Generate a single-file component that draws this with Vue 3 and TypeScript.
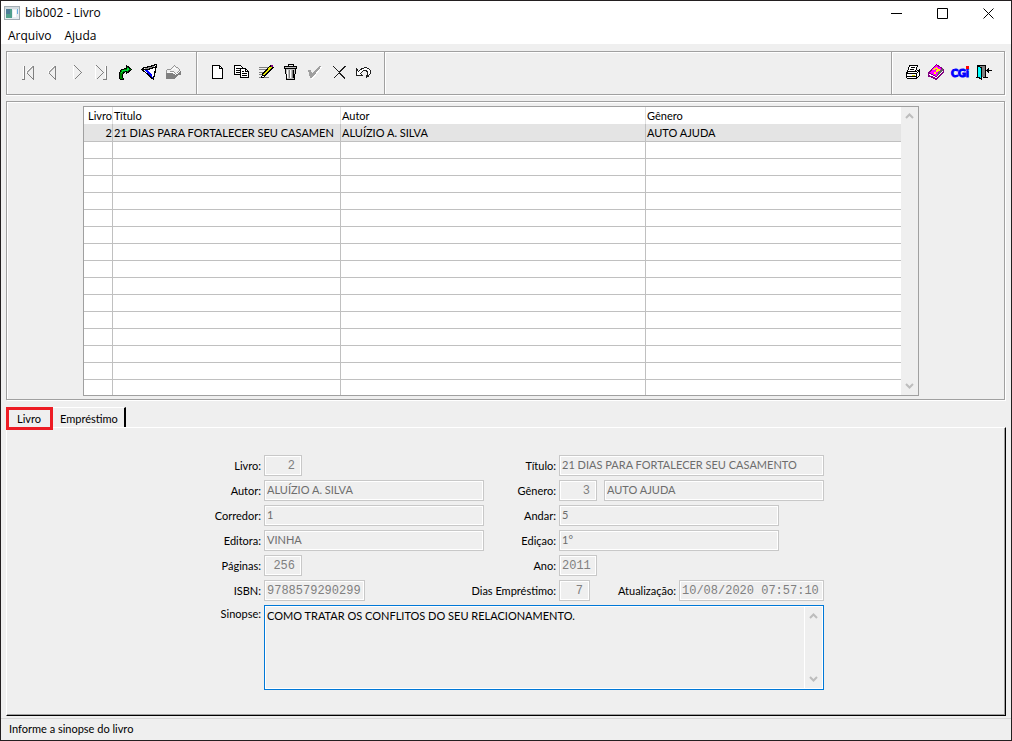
<script setup lang="ts">
import { ref } from 'vue'

interface Book {
  id: number | ''
  title: string
  author: string
  genre: string
}

const empty: Book = { id: '', title: '', author: '', genre: '' }
const rows: Book[] = [
  { id: 2, title: '21 DIAS PARA FORTALECER SEU CASAMEN', author: 'ALUÍZIO A. SILVA', genre: 'AUTO AJUDA' },
  ...Array.from({ length: 15 }, () => empty),
]
const synopsis = ref('COMO TRATAR OS CONFLITOS DO SEU RELACIONAMENTO.')
const activeTab = ref('Livro')
</script>

<template>
  <div class="window">
    <header class="titlebar">
      <svg class="app-icon" width="16" height="14" viewBox="0 0 16 14" aria-hidden="true">
        <rect x="0.5" y="0.5" width="15" height="13" fill="#e8eef2" stroke="#a3adb3" />
        <rect x="1" y="1" width="14" height="2" fill="#d3dbe0" />
        <rect x="2" y="3" width="6" height="9" fill="#4f9f8c" />
        <rect x="2" y="3" width="4" height="5" fill="#4c7c98" />
        <rect x="9" y="4" width="3" height="7" fill="#fff" />
        <rect x="13" y="3" width="1" height="5" fill="#69aee0" />
      </svg>
      <h1>bib002 - Livro</h1>
      <div class="controls">
        <button type="button" aria-label="Minimizar">
          <svg width="11" height="11" viewBox="0 0 11 11"><path d="M0 5.5H11" /></svg>
        </button>
        <button type="button" aria-label="Maximizar">
          <svg width="11" height="11" viewBox="0 0 11 11"><path d="M.5 .5H10.5V10.5H.5Z" /></svg>
        </button>
        <button type="button" aria-label="Fechar">
          <svg width="11" height="11" viewBox="0 0 11 11"><path d="M.5 .5L10.5 10.5M10.5 .5L.5 10.5" /></svg>
        </button>
      </div>
    </header>
    <nav class="menu">
      <button type="button">Arquivo</button>
      <button type="button">Ajuda</button>
    </nav>

    <div class="toolbar" role="toolbar">
      <div class="group nav-group">
        <button type="button" aria-label="Primeiro" disabled>
          <svg viewBox="0 0 16 16"><path d="M3.5 1.5V15M6 8.5L12.5 2" stroke="#fff" /><path d="M2 15.500H4.500V2M13.500 2V15.500L7 9" stroke="#808080" /><path d="M7 8.500L13 2.500" stroke="#a0a0a0" /></svg>
        </button>
        <button type="button" aria-label="Anterior" disabled>
          <svg viewBox="0 0 16 16"><path d="M4 8.5L10.5 2" stroke="#fff" /><path d="M11.5 2V15.5L5 9" stroke="#808080" /><path d="M5 8.500L11 2.500" stroke="#a0a0a0" /></svg>
        </button>
        <button type="button" aria-label="Próximo" disabled>
          <svg viewBox="0 0 16 16"><path d="M5.500 2V15" stroke="#fff" /><path d="M6.500 1.500L13.500 8.500L6.500 15.500" stroke="#808080" stroke-width="1.400" /></svg>
        </button>
        <button type="button" aria-label="Último" disabled>
          <svg viewBox="0 0 16 16"><path d="M3.5 2V15M13.5 2V14" stroke="#fff" /><path d="M4.500 1.500L11.500 8.500L4.500 15.500M14.500 2V15.500H11" stroke="#808080" stroke-width="1.400" /></svg>
        </button>
        <button type="button" aria-label="Atualizar">
          <svg viewBox="0 0 16 16"><path d="M2.500 14.500V9L4.500 5.500L9.500 4.500V1.500L14.500 5.500L9.500 9.500V7.500L7 8.500L5.500 10.500V13L6.500 15.500H4Z" fill="#008000" stroke="#000" /><path d="M4 9L6 6.500H10.500V4.500L12.500 5.500" stroke="#00e040" /></svg>
        </button>
        <button type="button" aria-label="Filtrar">
          <svg viewBox="0 0 16 16"><path d="M1 5L15 1L12 15Z" fill="#fff" /><path d="M2 5L6 5L11 11L12 15Z" fill="#00f" /><path d="M2 5L15 1L9 5Z" fill="#909090" /><path d="M1 4.500L15.500 .5L12.500 15.500L1 5.500H7L14 3" stroke="#000" stroke-width="1.200" /></svg>
        </button>
        <button type="button" aria-label="Limpar filtro" disabled>
          <svg viewBox="0 0 17 16"><path d="M1 9L7 9L11 11L17 6V11L13 12L11 15H1Z" fill="#808080" /><path d="M1 8L3 5L6 5L10 1L16 6L12 10L8 7L2 9Z" fill="#efefef" stroke="#909090" /><path d="M2 9L8 8L11 11L16 7M7 6L10 3L13 6" stroke="#fff" /></svg>
        </button>
      </div>
      <div class="group edit-group">
        <button type="button" aria-label="Novo">
          <svg viewBox="0 0 16 16"><path d="M3.500 1.500H10.500L13.500 4.500V14.500H3.500Z" fill="#fff" stroke="#000" /><path d="M10.500 1.500V4.500H13.500" stroke="#000" /></svg>
        </button>
        <button type="button" aria-label="Copiar">
          <svg viewBox="0 0 16 16"><path d="M1.500 1.500H7.500L9.500 3.500V10.500H1.500Z" fill="#fff" stroke="#000" /><path d="M3 4.500H7M3 6.500H7M3 8.500H7" stroke="#000" /><path d="M7.500 4.500H12.500L15.500 7.500V13.500H7.500Z" fill="#fff" stroke="#000" /><path d="M12.500 4.500V7.500H15.500M9 7.500H11M9 9.500H14M9 11.500H14" stroke="#000" /></svg>
        </button>
        <button type="button" aria-label="Editar">
          <svg viewBox="0 0 16 16"><path d="M1 3.500H11M1 5.500H9M1 8.500H8M1 10.500H6M1 13.500H11" stroke="#808080" /><path d="M3 14.500L4 10L13 .5L16 3.500L7 13Z" fill="#000" /><path d="M5.500 11L13 3" stroke="#e8e800" stroke-width="1.600" /><path d="M13 1H15V3H13Z" fill="#800080" /><path d="M4 12.500H6" stroke="#fff" /></svg>
        </button>
        <button type="button" aria-label="Excluir">
          <svg viewBox="0 0 16 16"><path d="M3.500 4.500H13.500L12.500 15.500H4.500Z" fill="#c0c0c0" stroke="#000" /><path d="M5.500 6V14M8.500 6V14" stroke="#fff" /><path d="M7.500 6V14M10.500 6V14" stroke="#808080" /><path d="M11.500 6V14" stroke="#000" /><path d="M2.500 2.500H14.500V4.500H2.500Z" fill="#c0c0c0" stroke="#000" /><path d="M6 1.500V.5H11V1.500" stroke="#000" /></svg>
        </button>
        <button type="button" aria-label="Confirmar" disabled>
          <svg viewBox="0 0 16 16"><path d="M3 8H5L7 10L14 3H16L7 15H5Z" fill="#fff" /><path d="M2 6H5L6 9L13 2H15.500L6 14H4Z" fill="#a0a0a0" /></svg>
        </button>
        <button type="button" aria-label="Cancelar">
          <svg viewBox="0 0 16 16"><path d="M2.500 2.500L14 14.500M14.500 2L2.500 14.500" stroke="#202020" /></svg>
        </button>
        <button type="button" aria-label="Desfazer">
          <svg viewBox="0 0 16 16"><path d="M1.500 5V11.500H7.500L5.500 9.500L8.500 6.500H11.500L12.500 8.500V11L11 12.500V13.500L14.500 11.500L15.500 9V6.500L13.500 4.500L10.500 3.500L7 4.500L3.500 7.500Z" fill="#fff" stroke="#202020" /></svg>
        </button>
      </div>
      <div class="group filler"></div>
      <div class="group app-group">
        <button type="button" aria-label="Imprimir">
          <svg viewBox="0 0 16 16"><path d="M5.500 1.500H13.500L11.500 7.500H3.500Z" fill="#fff" stroke="#000" /><path d="M7 3.500H11M6 5.500H10" stroke="#000" /><path d="M2.500 8.500L4.500 7.500H12.500L15.500 5.500V11.500L12.500 14.500H3.500L2.500 13.500Z" fill="#fff" stroke="#000" /><path d="M2 9.500H12.500L15.500 6.500M12.500 9V14M3 12.500H12" stroke="#000" /><path d="M8 11.500H11" stroke="#e0e000" /></svg>
        </button>
        <button type="button" aria-label="Manual">
          <svg viewBox="0 0 16 16"><path d="M.5 9.500L8.500 .5L15.500 5.500V8.500L8.500 15.500L.5 12Z" fill="#fff" stroke="#800080" /><path d="M.5 9L8.500 .5L15.500 5.500L8.500 12.500Z" fill="#f0f" stroke="#800080" /><path d="M10 8L15 4V7L9 12Z" fill="#606060" /><path d="M5.500 5.500L8.500 4L11 6L8 7.500M6 9H7.500" stroke="#ff0" stroke-width="1.500" /><path d="M1 11.500L8.500 14.500L15 8.500" stroke="#800080" /></svg>
        </button>
        <button type="button" class="cgi">CGi</button>
        <button type="button" aria-label="Sair">
          <svg viewBox="0 0 16 16"><path d="M1 1.500H9.500V13.500M0 13.500H3M7 13.500H12" stroke="#000" /><path d="M4 2H9V13H4Z" fill="#808080" /><path d="M1.500 1.500L5.500 4V15L1.500 13Z" fill="#0ff" stroke="#000" /><path d="M11 6.500H15.500" stroke="#000" /><path d="M10 6.500L13 3.500V9.500Z" fill="#000" /></svg>
        </button>
      </div>
    </div>

    <main>
      <section class="grid-panel">
        <div class="grid-box">
          <table>
            <colgroup><col class="c-id" /><col class="c-title" /><col class="c-author" /><col class="c-genre" /></colgroup>
            <thead>
              <tr><th class="num">Livro</th><th>Título</th><th>Autor</th><th>Gênero</th></tr>
            </thead>
            <tbody>
              <tr v-for="(b, i) in rows" :key="i" :class="{ selected: i === 0 }">
                <td class="num">{{ b.id }}</td><td>{{ b.title }}</td><td>{{ b.author }}</td><td>{{ b.genre }}</td>
              </tr>
            </tbody>
          </table>
          <div class="scroll">
            <svg width="9" height="6" viewBox="0 0 9 6"><path d="M1 5L4.500 1.500L8 5" /></svg>
            <svg width="9" height="6" viewBox="0 0 9 6"><path d="M1 1L4.500 4.500L8 1" /></svg>
          </div>
        </div>
      </section>

      <div class="tabs" role="tablist">
        <button
          v-for="t in ['Livro', 'Empréstimo']"
          :key="t"
          type="button"
          role="tab"
          :aria-selected="activeTab === t"
          :class="{ active: activeTab === t }"
          @click="activeTab = t"
        >{{ t }}</button>
      </div>

      <section class="page">
        <form @submit.prevent>
          <label for="livro">Livro:</label>
          <div><input id="livro" class="mono right w38" value="2" readonly /></div>
          <label for="titulo">Título:</label>
          <div><input id="titulo" value="21 DIAS PARA FORTALECER SEU CASAMENTO" readonly /></div>

          <label for="autor">Autor:</label>
          <div><input id="autor" class="w220" value="ALUÍZIO A. SILVA" readonly /></div>
          <label for="genero">Gênero:</label>
          <div>
            <input id="genero" class="mono right w38" value="3" readonly />
            <input class="w220 push" aria-label="Nome do gênero" value="AUTO AJUDA" readonly />
          </div>

          <label for="corredor">Corredor:</label>
          <div><input id="corredor" class="w220" value="1" readonly /></div>
          <label for="andar">Andar:</label>
          <div><input id="andar" class="w220" value="5" readonly /></div>

          <label for="editora">Editora:</label>
          <div><input id="editora" class="w220" value="VINHA" readonly /></div>
          <label for="edicao">Ediçao:</label>
          <div><input id="edicao" class="w220" value="1°" readonly /></div>

          <label for="paginas">Páginas:</label>
          <div><input id="paginas" class="mono right w38" value="256" readonly /></div>
          <label for="ano">Ano:</label>
          <div><input id="ano" class="mono w38" value="2011" readonly /></div>

          <label for="isbn">ISBN:</label>
          <div><input id="isbn" class="mono w101" value="9788579290299" readonly /></div>
          <label for="dias">Dias Empréstimo:</label>
          <div>
            <input id="dias" class="mono right w31" value="7" readonly />
            <label for="atualizacao" class="push">Atualização:</label>
            <input id="atualizacao" class="mono w145" value="10/08/2020 07:57:10" readonly />
          </div>

          <label for="sinopse" class="top">Sinopse:</label>
          <div class="memo">
            <textarea id="sinopse" v-model="synopsis"></textarea>
            <div class="scroll">
              <svg width="9" height="6" viewBox="0 0 9 6"><path d="M1 5L4.500 1.500L8 5" /></svg>
              <svg width="9" height="6" viewBox="0 0 9 6"><path d="M1 1L4.500 4.500L8 1" /></svg>
            </div>
          </div>
        </form>
      </section>
    </main>

    <footer>Informe a sinopse do livro</footer>
  </div>
</template>

<style>
body { margin: 0; background: #efefef; }
</style>

<style scoped>
* { box-sizing: border-box; }
.window {
  min-height: 100vh;
  display: flex;
  flex-direction: column;
  border: 1px solid #231f20;
  background: #efefef;
  color: #000;
  font: 11px/17px Lato, sans-serif;
}
button { font: inherit; color: inherit; background: none; border: 0; padding: 0; margin: 0; }
.titlebar { display: flex; align-items: center; height: 24px; padding-left: 3px; background: #fff; font: 12px/24px "Open Sans", sans-serif; }
h1 { font: inherit; margin: 0 0 0 5px; }
.controls { display: flex; margin-left: auto; }
.controls button { width: 46px; height: 24px; display: flex; align-items: center; justify-content: center; }
.controls path { fill: none; stroke: #000; }
.menu { display: flex; gap: 13px; height: 19px; padding-left: 7px; background: #fff; font: 12px/21px "Open Sans", sans-serif; }
.menu button { line-height: 21px; height: 21px; }
.toolbar { display: flex; height: 44px; margin: 7px 6px 0 5px; }
.group { display: flex; align-items: center; justify-content: space-between; border: 1px solid #a0a0a0; box-shadow: inset 1px 1px #fff, 0 1px #fff; }
.group + .group { border-left: 0; }
.group:last-child { border-left: 1px solid #a0a0a0; box-shadow: inset 1px 1px #fff, 1px 1px #fff; }
.filler { flex: 1; border-right: 0; }
.nav-group { width: 191px; padding: 0 11px 2px 9px; }
.edit-group { width: 188px; padding: 0 9px 2px 8px; }
.app-group { padding: 0 8px 2px; }
.group button { width: 24px; height: 24px; display: flex; align-items: center; justify-content: center; }
.group svg { width: 16px; height: 16px; fill: none; shape-rendering: crispEdges; }
.group .cgi { position: relative; color: #00f; font: 900 11px Lato, sans-serif; -webkit-text-stroke: 1px #00f; }
.cgi::after { content: ""; position: absolute; top: 6px; right: 3px; width: 3px; height: 3px; background: #f00; }
main { display: flex; flex-direction: column; flex: 1; padding: 6px 5px 0; }
.grid-panel { border: 1px solid #a0a0a0; margin-right: 1px; box-shadow: inset 1px 1px #fff, 1px 1px #fff; padding: 4px 85px 3px 76px; }
.grid-box { display: flex; height: 290px; border: 1px solid #a0a0a0; background: #fff; overflow: hidden; }
table { flex: 1; table-layout: fixed; border-collapse: separate; border-spacing: 0; width: 100%; height: min-content; }
.c-id { width: 29px; }
.c-title { width: 228px; }
.c-author { width: 305px; }
th, td { height: 17px; padding: 0 0 0 1px; font-weight: normal; line-height: 16px; text-align: left; white-space: nowrap; border-right: 1px solid #c0c0c0; }
th { border-color: #e0e0e0; }
td { border-bottom: 1px solid #c0c0c0; }
th:last-child, td:last-child { border-right: 0; }
.num { text-align: right; padding: 0; }
.selected td { height: 18px; background: #e4e4e4; }
.scroll { flex: none; width: 17px; display: flex; flex-direction: column; align-items: center; justify-content: space-between; padding: 6px 0; background: #efefef; }
.scroll path { fill: none; stroke: #bdbdbd; stroke-width: 2; }
.tabs { display: flex; align-items: flex-end; margin-top: 7px; height: 20px; }
.tabs button { position: relative; height: 20px; padding: 0 6px 0 7px; line-height: 22px; border-top: 1px solid #fff; border-right: 2px solid #000; }
.tabs .active { z-index: 1; height: 23px; margin-bottom: -3px; padding: 0 9px 0 8px; line-height: 17px; border: 3px solid #ed1c24; }
.page { flex: 1; border: 1px solid; border-color: #fff #000 #000 #fff; box-shadow: inset -1px -1px #a0a0a0; padding: 27px 0 25px 200px; }
form { display: grid; grid-template-columns: 57px 220px 75px 265px; row-gap: 4px; }
form > div { display: flex; min-width: 0; }
label { justify-self: end; white-space: nowrap; padding-right: 3px; line-height: 21px; }
.top { line-height: 18px; }
input { width: 100%; height: 21px; margin: 0; padding: 0 2px 2px; border: 1px solid #c8c8c8; box-shadow: inset 0 0 0 1px #fff; border-radius: 0; background: #efefef; color: #6d6d6d; font: inherit; outline: 0; }
.mono { font: 12px "Liberation Mono", monospace; padding: 1px 2px 0; color: #808080; }
.right { text-align: right; padding-right: 6px; }
.w31 { width: 31px; }
.w38 { width: 38px; }
.w101 { width: 101px; }
.w145 { width: 145px; }
.w220 { width: 220px; }
.push { margin-left: auto; }
.memo { grid-column: 2 / -1; height: 85px; border: 1px solid #0078d7; }
textarea { flex: 1; resize: none; border: 1px solid #fff; margin: 0; padding: 0 1px; background: #efefef; font: inherit; color: #000; outline: 0; overflow: hidden; }
.memo .scroll { width: 18px; border: 1px solid #fff; border-left: 0; }
footer { margin-top: 2px; height: 22px; border-top: 1px solid #d7d7d7; padding-left: 8px; line-height: 20px; }
</style>
